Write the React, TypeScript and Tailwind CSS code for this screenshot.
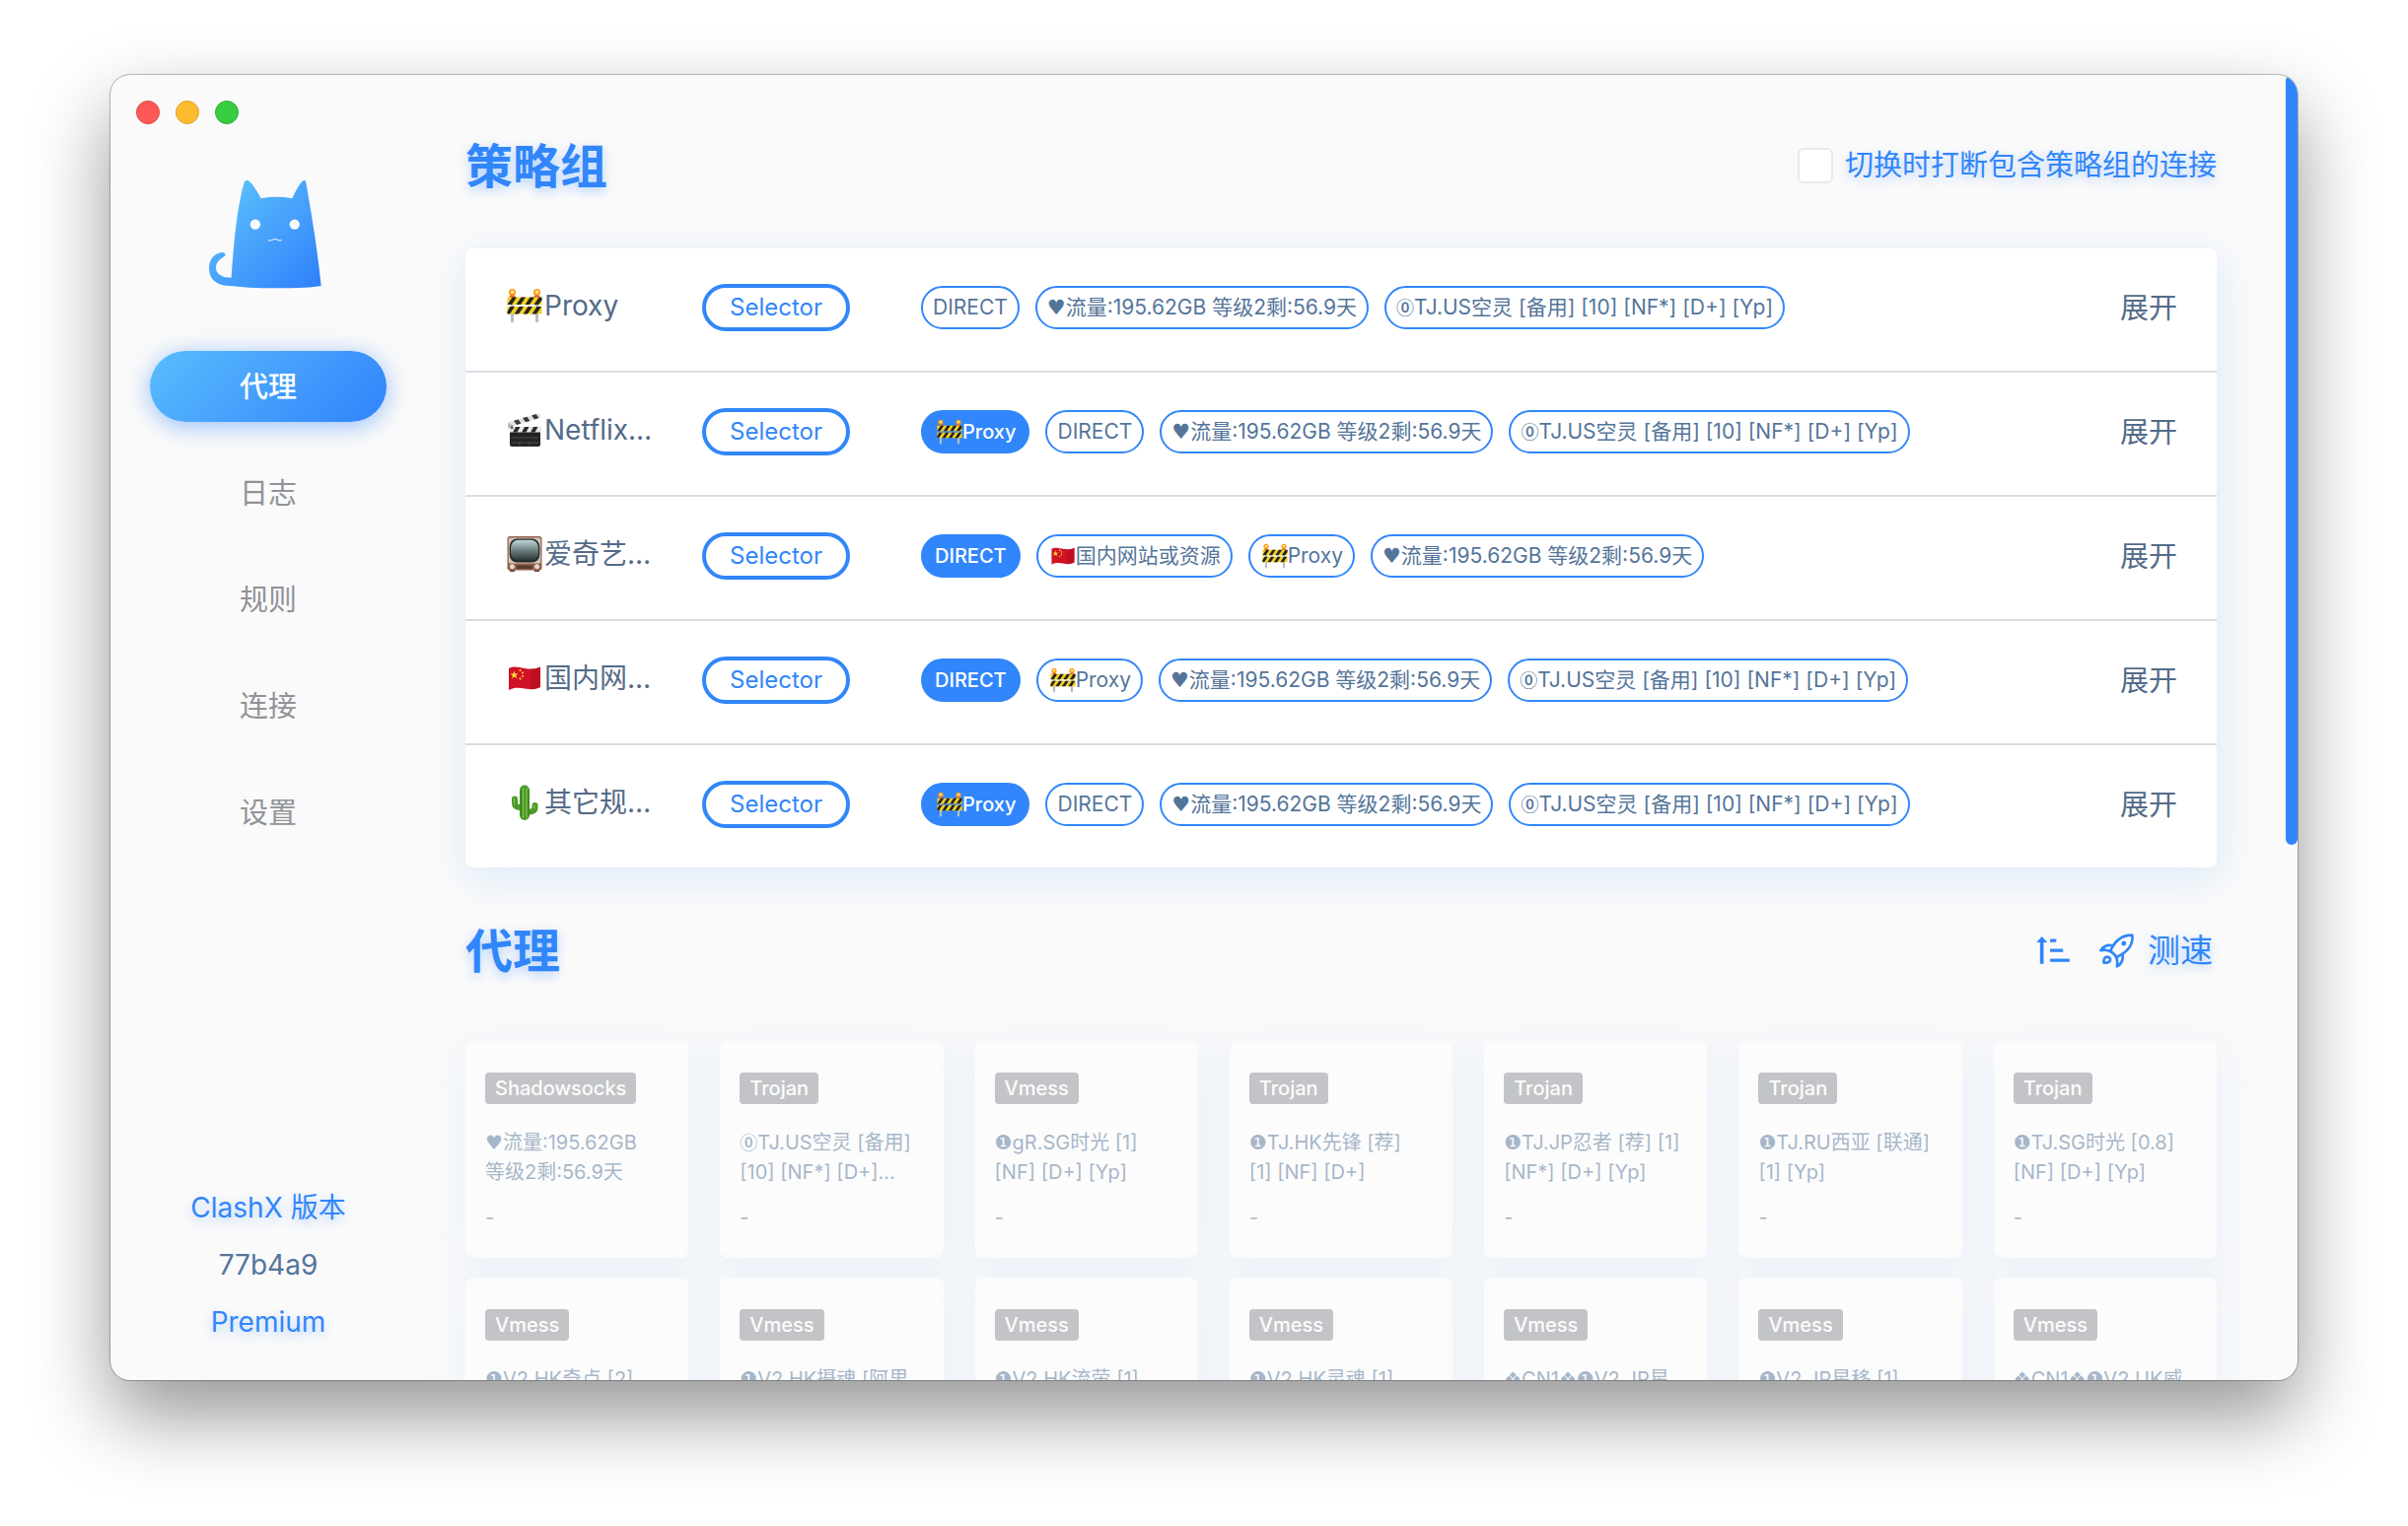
import React, { useState } from "react";

type EmojiName = "barrier" | "clapper" | "tv" | "flag" | "cactus";

function Emoji({ name, className }: { name: EmojiName; className: string }) {
  return (
    <svg viewBox="0 0 36 36" className={className} role="img" aria-label={name}>
      {name === "barrier" && (
        <>
          <path d="M4 10h3v25H4zM29 10h3v25h-3z" fill="#b9bcc0" />
          <circle cx="5.5" cy="4.500" r="3.600" fill="#ff9d1c" />
          <circle cx="30.500" cy="4.500" r="3.600" fill="#ff9d1c" />
          <circle cx="5.500" cy="4.300" r="1.700" fill="#ffe98a" />
          <circle cx="30.500" cy="4.300" r="1.700" fill="#ffe98a" />
          <path d="M3.500 7.500h4L9 10H2zM28.500 7.500h4L34 10h-7z" fill="#f0521e" />
          <path d="M.5 9.500h35V17H.5zM.5 19h35v7.500H.5z" fill="#f2d024" />
          <path
            d="M.5 17l5-7.500H10L5 17zM9.500 17l5-7.500H19L14 17zM18.500 17l5-7.500H28L23 17zM27.500 17l5-7.500h3v3L32 17zM.5 24l3-5H8l-5 7.500H.5zM7.500 26.500l5-7.500H17l-5 7.500zM16.500 26.500l5-7.500H26l-5 7.500zM25.500 26.500l5-7.500H35l-5 7.500z"
            fill="#26241f"
          />
        </>
      )}
      {name === "clapper" && (
        <>
          <path d="M3 15h31v18a2 2 0 0 1-2 2H5a2 2 0 0 1-2-2z" fill="#232426" />
          <path d="M3 15h32v5.500H3z" fill="#e6e8e9" />
          <path d="M6 20.500L9 15h4.500l-3 5.500zM15 20.500l3-5.500h4.500l-3 5.500zM24 20.500l3-5.500h4.500l-3 5.500z" fill="#2b2c2e" />
          <path d="M1 10.500L33 1l1.500 4.500-32 9.500z" fill="#dfe2e4" />
          <path d="M7 8.700L11.500 7.400l3 4.200-4.500 1.300zM16 6l4.500-1.300 3 4.200L19 10.200zM25 3.400L29.500 2l3 4.100-4.500 1.300z" fill="#3a3b3d" />
          <path d="M1 11l6 2.500-.5 4.500-5.500-2z" fill="#b9bdc0" />
          <circle cx="5" cy="15.500" r="1.200" fill="#555" />
          <path d="M5 26h27M5 31h27M13 31v3.500M23 31v3.500" stroke="#55575a" strokeWidth=".8" />
        </>
      )}
      {name === "tv" && (
        <>
          <defs>
            <linearGradient id="tvScreen" x1="0" y1="0" x2="0" y2="1">
              <stop offset="0" stopColor="#c3d8da" />
              <stop offset="0.500" stopColor="#6c7e80" />
              <stop offset="1" stopColor="#262e2e" />
            </linearGradient>
          </defs>
          <path d="M3 33.500h5V36H3zM28 33.500h5V36h-5z" fill="#6d4a3e" />
          <rect x=".5" y="0" width="35" height="34.500" rx="2.500" fill="#8f5f50" />
          <rect x="1.700" y="1.500" width="32.600" height="26" rx="1.500" fill="#cfc4b6" />
          <rect x="2.700" y="2.500" width="30.600" height="24" rx="8" fill="#1d2423" />
          <rect x="4" y="3.700" width="28" height="21.500" rx="7.500" fill="url(#tvScreen)" />
          <path d="M10 29.500h16v3.500H10z" fill="#5b3d33" />
          <circle cx="5.500" cy="30.700" r="2.500" fill="#e3d9cb" />
          <circle cx="30.500" cy="30.700" r="2.500" fill="#e3d9cb" />
        </>
      )}
      {name === "flag" && (
        <>
          <path d="M2 8c6-3 10-1 16 0s10 1 16-1.500V27c-6 3-10 2.500-16 1.500S8 27 2 30z" fill="#cf1226" />
          <path d="M24 8.500c4 0 7-.5 10-2V27c-3 1.500-6 2-10 2z" fill="#a90d20" opacity=".45" />
          <path d="M7.500 10.500l1 2.900 3-.2-2.300 1.900 1 2.900-2.600-1.600-2.500 1.900.8-3-2.500-1.700 3.100-.1z" fill="#ffde32" />
          <g fill="#ffde32">
            <circle cx="13.500" cy="10" r="1" />
            <circle cx="16" cy="12.500" r="1" />
            <circle cx="16" cy="16" r="1" />
            <circle cx="13.500" cy="18.500" r="1" />
          </g>
        </>
      )}
      {name === "cactus" && (
        <>
          <path
            d="M8 14.500v4.500q0 3.500 5 4h5M28.500 21v2.500q0 3.500-5 4H18"
            fill="none"
            stroke="#4c9a2b"
            strokeWidth="6"
            strokeLinecap="round"
          />
          <path d="M18 5.500V31" stroke="#4c9a2b" strokeWidth="10" strokeLinecap="round" />
          <path
            d="M16.500 3.500V33M20 3.500V33M7.500 14v6M28 21v3"
            fill="none"
            stroke="#7cc450"
            strokeWidth="1.200"
            strokeLinecap="round"
          />
          <path d="M22 5v27M14.300 6v26" stroke="#35761d" strokeWidth=".8" />
        </>
      )}
    </svg>
  );
}

function CatLogo() {
  return (
    <svg viewBox="336 365 361 332" className="mx-auto h-[111px] w-[120px]" role="img" aria-label="Clash">
      <defs>
        <linearGradient id="cat" x1="0" y1="0" x2="1" y2="1">
          <stop offset="0.150" stopColor="#5abcfd" />
          <stop offset="0.950" stopColor="#3083fb" />
        </linearGradient>
      </defs>
      <path
        fill="url(#cat)"
        d="M404 664C410 570 421 450 443 374Q447 362 456 368C468 376 482 398 494 422Q540 413 590 422C600 400 612 376 624 367Q630 363 632 374C652 490 668 590 678 689Q640 696 540 696Q450 696 404 689C360 690 336 670 336 634C336 605 356 588 378 587Q388 589 385 597C370 607 357 615 357 634C357 655 380 664 404 664Z"
      />
      <circle cx="477" cy="501" r="15.500" fill="#fafafa" />
      <circle cx="597" cy="501" r="15.500" fill="#fafafa" />
      <path d="M516 550Q526 552 531 548Q537 543 543 548Q548 552 558 550" fill="none" stroke="#fafafa" strokeWidth="3" />
    </svg>
  );
}

function SortIcon() {
  return (
    <svg viewBox="315 266 102 85" className="h-7 w-[34px]" fill="#3186fb" aria-hidden="true">
      <path d="M331.500 266L349 284H337v66h-11v-66H315zM357 273.500h19v10h-19zM357 304h40v10h-40zM357 334h60v10h-60z" />
    </svg>
  );
}

function RocketIcon() {
  return (
    <svg
      viewBox="506 256 106 106"
      className="h-[35px] w-[35px]"
      fill="none"
      stroke="#3186fb"
      strokeWidth="8"
      strokeLinejoin="round"
      strokeLinecap="round"
      aria-hidden="true"
    >
      <path d="M607 261C577 260 556 274 540 309L560 328C594 312 611 291 607 261Z" />
      <path d="M547 293Q523 288 510 308Q530 303 542 313" />
      <path d="M577 319Q582 345 560 357Q564 339 556 325" />
      <path d="M520 346C518 333 524 326 533 328C545 334 541 348 520 346Z" />
      <circle cx="581" cy="286" r="7.500" fill="#3186fb" stroke="none" />
    </svg>
  );
}

const NAV = ["代理", "日志", "规则", "连接", "设置"];

type Option = { label: string; emoji?: EmojiName; active?: boolean };
type Group = { name: string; emoji: EmojiName; options: Option[] };

const TRAFFIC: Option = { label: "♥流量:195.62GB 等级2剩:56.9天" };
const US: Option = { label: "⓪TJ.US空灵 [备用] [10] [NF*] [D+] [Yp]" };
const DIRECT: Option = { label: "DIRECT" };
const PROXY: Option = { label: "Proxy", emoji: "barrier" };

const GROUPS: Group[] = [
  { name: "Proxy", emoji: "barrier", options: [DIRECT, TRAFFIC, US] },
  { name: "Netflix…", emoji: "clapper", options: [{ ...PROXY, active: true }, DIRECT, TRAFFIC, US] },
  {
    name: "爱奇艺…",
    emoji: "tv",
    options: [{ ...DIRECT, active: true }, { label: "国内网站或资源", emoji: "flag" }, PROXY, TRAFFIC],
  },
  { name: "国内网…", emoji: "flag", options: [{ ...DIRECT, active: true }, PROXY, TRAFFIC, US] },
  { name: "其它规…", emoji: "cactus", options: [{ ...PROXY, active: true }, DIRECT, TRAFFIC, US] },
];

type Proxy = { type: string; lines: string[] };

const PROXIES: Proxy[] = [
  { type: "Shadowsocks", lines: ["♥流量:195.62GB", "等级2剩:56.9天"] },
  { type: "Trojan", lines: ["⓪TJ.US空灵 [备用]", "[10] [NF*] [D+]…"] },
  { type: "Vmess", lines: ["❶gR.SG时光 [1]", "[NF] [D+] [Yp]"] },
  { type: "Trojan", lines: ["❶TJ.HK先锋 [荐]", "[1] [NF] [D+]"] },
  { type: "Trojan", lines: ["❶TJ.JP忍者 [荐] [1]", "[NF*] [D+] [Yp]"] },
  { type: "Trojan", lines: ["❶TJ.RU西亚 [联通]", "[1] [Yp]"] },
  { type: "Trojan", lines: ["❶TJ.SG时光 [0.8]", "[NF] [D+] [Yp]"] },
  { type: "Vmess", lines: ["❶V2.HK奇点 [2]"] },
  { type: "Vmess", lines: ["❶V2.HK摄魂 [阿里"] },
  { type: "Vmess", lines: ["❶V2.HK流萤 [1]"] },
  { type: "Vmess", lines: ["❶V2.HK灵魂 [1]"] },
  { type: "Vmess", lines: ["❖CN1❖❶V2.JP星"] },
  { type: "Vmess", lines: ["❶V2.JP星移 [1]"] },
  { type: "Vmess", lines: ["❖CN1❖❶V2.UK威"] },
];

/** Draws the leading symbols of a proxy name in fonts that give them an even size. */
function Label({ text }: { text: string }) {
  return (
    <span className="whitespace-pre">
      {text.split(/([♥❶❖⓪])/).map((part, i) => {
        if (part === "⓪") {
          return (
            <span key={i} className="font-['Noto_Sans_CJK_SC',sans-serif] text-lg leading-none font-medium">
              {part}
            </span>
          );
        }
        if (part === "♥" || part === "❶" || part === "❖") {
          return (
            <span key={i} className="font-['DejaVu_Sans',sans-serif] leading-none">
              {part}
            </span>
          );
        }
        return part;
      })}
    </span>
  );
}

function Sidebar() {
  return (
    <aside className="flex w-80 shrink-0 flex-col px-10 pb-[30px]">
      <div className="-ml-3.5 flex gap-4 pt-[26px]">
        <button aria-label="Close" className="size-6 rounded-full border border-[#e0443e] bg-[#fe5857]" />
        <button aria-label="Minimize" className="size-6 rounded-full border border-[#dea123] bg-[#fdbc2f]" />
        <button aria-label="Zoom" className="size-6 rounded-full border border-[#2bb034] bg-[#37cd40]" />
      </div>
      <div className="mt-14">
        <CatLogo />
      </div>
      <nav className="mt-[63px] flex flex-col gap-9">
        {NAV.map((item, i) => (
          <a
            key={item}
            href="#"
            aria-current={i === 0 ? "page" : undefined}
            className={
              i === 0
                ? "flex h-[72px] items-center justify-center rounded-full bg-[linear-gradient(135deg,#5abcfd,#3083fb)] pt-0.5 text-[29px] font-medium text-white shadow-[0_4px_24px_rgba(49,134,251,0.5)]"
                : "flex h-[72px] items-center justify-center rounded-full pt-0.5 text-[29px] text-[#909399]"
            }
          >
            {item}
          </a>
        ))}
      </nav>
      <div className="mt-auto text-center text-[28px] leading-[58px] text-[#54759a]">
        <p className="text-[#3186fb] text-shadow-[0_4px_12px_rgba(49,134,251,0.35)]">ClashX 版本</p>
        <p>77b4a9</p>
        <p className="text-[#3186fb] text-shadow-[0_4px_12px_rgba(49,134,251,0.35)]">Premium</p>
      </div>
    </aside>
  );
}

function GroupRow({ group }: { group: Group }) {
  return (
    <li className="flex items-center border-b-2 border-[#d8dee2] px-10 pt-9 pb-10 last:border-b-0">
      <div className="flex w-[200px] shrink-0 items-center gap-0.5 pb-1 pl-0.5 text-[28px] leading-[44px] text-[#546b87]">
        <Emoji name={group.emoji} className="size-9" />
        <span className="whitespace-nowrap">{group.name}</span>
      </div>
      <div className="w-[222px] shrink-0">
        <span className="inline-flex h-12 w-[150px] items-center justify-center rounded-full border-4 border-[#3186fb] text-2xl text-[#3186fb]">
          Selector
        </span>
      </div>
      <div className="flex min-w-0 flex-1 gap-4 overflow-hidden">
        {group.options.map((o) => (
          <button
            key={o.label}
            className={
              o.active
                ? "flex h-11 shrink-0 items-center rounded-full border-2 border-[#3186fb] bg-[#3186fb] px-3 text-xl font-medium whitespace-nowrap text-white"
                : "flex h-11 shrink-0 items-center rounded-full border-2 border-[#3186fb] px-2.5 text-[21px] whitespace-nowrap text-[#54759a]"
            }
          >
            {o.emoji && <Emoji name={o.emoji} className="ml-0.5 size-[26px]" />}
            <Label text={o.label} />
          </button>
        ))}
      </div>
      <button className="shrink-0 pt-0.5 text-[29px] text-[#546b87]">展开</button>
    </li>
  );
}

function ProxyCard({ proxy }: { proxy: Proxy }) {
  return (
    <li className="h-[220px] min-w-0 rounded-lg bg-white px-5 pt-8 text-xl leading-[30px] text-[#54759a] opacity-50 shadow-[2px_10px_40px_4px_rgba(44,138,248,0.12)]">
      <span className="inline-block rounded bg-[#8d9096] px-2.5 leading-8 font-medium text-white">{proxy.type}</span>
      <div className="mt-6 h-[60px] whitespace-nowrap">
        {proxy.lines.map((line) => (
          <p key={line}>
            <Label text={line} />
          </p>
        ))}
      </div>
      <p className="mt-4">-</p>
    </li>
  );
}

export default function App() {
  const [checked, setChecked] = useState(false);
  return (
    <div className="h-screen overflow-hidden bg-white px-28 pt-[76px] pb-[148px] font-['Inter','Noto_Sans_CJK_SC','DejaVu_Sans',sans-serif]">
      <div className="relative flex h-full overflow-hidden rounded-[20px] bg-[#fafafa] shadow-[0_0_0_1px_rgba(0,0,0,0.25),0_36px_80px_rgba(0,0,0,0.42)]">
        <Sidebar />
        <main className="min-w-0 flex-1 pt-[68px] pr-[82px] pl-10">
          <header className="flex h-12 items-center justify-between">
            <h1 className="pt-0.5 text-5xl leading-none font-bold text-[#3186fb] text-shadow-[0_4px_12px_rgba(49,134,251,0.35)]">
              策略组
            </h1>
            <label className="flex items-center gap-3 text-[29px] leading-9 text-[#3186fb] text-shadow-[0_4px_12px_rgba(49,134,251,0.35)]">
              <input
                type="checkbox"
                checked={checked}
                onChange={() => setChecked(!checked)}
                className="size-9 appearance-none rounded-md border-2 border-[#e4eaef] bg-white checked:bg-[#3186fb]"
              />
              切换时打断包含策略组的连接
            </label>
          </header>
          <ul className="mt-[60px] rounded-lg bg-white shadow-[2px_10px_40px_4px_rgba(44,138,248,0.13)]">
            {GROUPS.map((g) => (
              <GroupRow key={g.name} group={g} />
            ))}
          </ul>
          <header className="mt-[60px] flex h-12 items-center justify-between">
            <h2 className="pt-0.5 text-5xl leading-none font-bold text-[#3186fb] text-shadow-[0_4px_12px_rgba(49,134,251,0.35)]">
              代理
            </h2>
            <div className="flex items-center pr-1">
              <button aria-label="Sort">
                <SortIcon />
              </button>
              <button className="ml-[30px] flex items-center gap-3.5 text-[33px] leading-none text-[#3186fb] text-shadow-[0_4px_12px_rgba(49,134,251,0.35)]">
                <RocketIcon />
                测速
              </button>
            </div>
          </header>
          <ul className="mt-[68px] grid grid-cols-7 gap-x-8 gap-y-5">
            {PROXIES.map((p, i) => (
              <ProxyCard key={i} proxy={p} />
            ))}
          </ul>
        </main>
        <div className="absolute top-0 right-0 h-[59%] w-3 rounded-full bg-[#3186fb]" />
      </div>
    </div>
  );
}
